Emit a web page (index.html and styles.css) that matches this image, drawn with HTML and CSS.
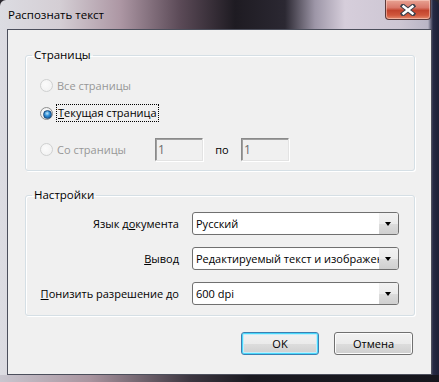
FILE: index.html
```html
<!DOCTYPE html>
<html lang="ru">
<head>
    <meta charset="UTF-8">
    <title>Распознать текст</title>
    <link rel="stylesheet" href="styles.css">
</head>
<body>
    <div class="window">
        <div class="titlebar">
            <span class="title">Распознать текст</span>
            <button class="close" title="Закрыть">
                <svg width="16" height="12" viewBox="0 0 16 12">
                    <path d="M3 2 L13 10 M13 2 L3 10" stroke="#3b3f4a" stroke-width="4.5" stroke-linecap="square"/>
                    <path d="M3.5 2.5 L12.5 9.5 M12.5 2.5 L3.5 9.5" stroke="#ffffff" stroke-width="2.4" stroke-linecap="square"/>
                </svg>
            </button>
        </div>

        <div class="client">
            <fieldset class="group pages">
                <legend>Страницы</legend>
                <label class="radio disabled"><span class="dot"></span>Все страницы</label>
                <label class="radio checked"><span class="dot"></span><span class="focus"><u>Т</u>екущая страница</span></label>
                <div class="range">
                    <label class="radio disabled"><span class="dot"></span>Со страницы</label>
                    <input class="num" type="text" value="1" disabled>
                    <span class="to">по</span>
                    <input class="num" type="text" value="1" disabled>
                </div>
            </fieldset>

            <fieldset class="group settings">
                <legend>Настройки</legend>
                <span class="field-label">Язык д<u>о</u>кумента</span>
                <div class="combo"><span class="combo-text">Русский</span><span class="arrow"></span></div>

                <span class="field-label"><u>В</u>ывод</span>
                <div class="combo"><span class="combo-text">Редактируемый текст и изображения</span><span class="arrow"></span></div>

                <span class="field-label"><u>П</u>онизить разрешение до</span>
                <div class="combo"><span class="combo-text">600 dpi</span><span class="arrow"></span></div>
            </fieldset>

            <div class="buttons">
                <button class="btn default">OK</button>
                <button class="btn">Отмена</button>
            </div>
        </div>
    </div>
</body>
</html>
```

FILE: styles.css
```css
* {
    margin: 0;
    padding: 0;
    box-sizing: border-box;
}

body {
    background: #2a2830;
    font-family: 'Open Sans', 'Noto Sans', sans-serif;
    font-size: 11px;
    color: #000;
}

.window {
    width: 439px;
    height: 382px;
    padding: 0 7px 7px 7px;
    border-radius: 6px 6px 0 0;
    background:
        linear-gradient(90deg, #c9c6cf 0, #a9949f 90px, #3c3640 190px, #1b1a21 250px, #16161d 100%) bottom / 100% 7px no-repeat,
        linear-gradient(90deg, #dcdce2 0, #d4ced4 60px, #ad97a4 120px, #5b4a57 180px, #1e1b22 235px, #2b2832 285px, #9d96a7 315px, #d6cedb 345px, #cdc6d3 400px, #b9b5c5 428px, #262a44 433px, #1d2036 100%);
}

.titlebar {
    height: 29px;
    display: flex;
    justify-content: space-between;
    align-items: flex-start;
}

.title {
    padding: 6px 0 0 1px;
    line-height: 17px;
    font-size: 11.5px;
    color: #000;
}

.close {
    width: 46px;
    height: 20px;
    margin-right: 1px;
    border: 1px solid #5b3a3a;
    border-top: none;
    border-radius: 0 0 4px 4px;
    background: linear-gradient(#e8a393 0, #d9786a 40%, #c2432d 55%, #d0573c 80%, #e48a6e 100%);
    box-shadow: inset 0 0 0 1px rgba(255, 220, 210, 0.5);
    display: flex;
    align-items: center;
    justify-content: center;
}

.client {
    height: 346px;
    background: #f0f0f0;
    border: 1px solid #4c4f5c;
    padding: 17px 17px 0 17px;
}

.group {
    border: 1px solid #d5dfe5;
    border-radius: 3px;
    width: 390px;
    box-shadow: inset 1px 1px 0 #fff, 1px 1px 0 #fff;
}

.group legend {
    margin-left: -8px;
    padding: 0 2px;
    line-height: 16px;
    font-size: 11.5px;
}

.pages {
    padding: 11px 10px 9px 14px;
}

.radio {
    display: flex;
    align-items: center;
    height: 22px;
    gap: 4px;
}

.radio + .radio {
    margin-top: 6px;
}

.radio.disabled {
    color: #979797;
}

.dot {
    width: 13px;
    height: 13px;
    border-radius: 50%;
    border: 1px solid #8e8f8f;
    background: radial-gradient(circle at 40% 40%, #fff 0, #f2f2f2 45%, #d4d4d4 100%);
    flex: none;
    position: relative;
}

.disabled .dot {
    border-color: #cfd0d0;
    background: radial-gradient(circle at 40% 40%, #fbfbfb 0, #efefef 100%);
}

.checked .dot::after {
    content: '';
    position: absolute;
    left: 2px;
    top: 2px;
    width: 7px;
    height: 7px;
    border-radius: 50%;
    border: 1px solid #1d4a7a;
    background: radial-gradient(circle at 45% 35%, #bfe6fa 0, #2a8ad4 45%, #0f4f8f 100%);
}

.focus {
    outline: 1px dotted #000;
    padding: 0 1px;
    line-height: 16px;
}

.range {
    display: flex;
    align-items: center;
    margin-top: 14px;
    height: 23px;
}

.range .radio {
    width: 115px;
}

.num {
    width: 48px;
    height: 23px;
    background: #f0f0f0;
    border: 1px solid;
    border-color: #8a8a8a #e3e3e3 #e3e3e3 #8a8a8a;
    box-shadow: inset 1px 1px 0 #a0a0a0, 1px 1px 0 #fff;
    font: inherit;
    font-size: 12px;
    color: #6d6d6d;
    padding: 0 2px;
}

.to {
    width: 38px;
    text-align: center;
}

.settings {
    margin-top: 16px;
    padding: 9px 10px 10px 14px;
    display: grid;
    grid-template-columns: 139px 207px;
    column-gap: 13px;
    row-gap: 12px;
    align-items: center;
}

.field-label {
    text-align: right;
    white-space: nowrap;
}

.combo {
    display: flex;
    height: 23px;
    border: 1px solid #707070;
    border-radius: 3px;
    background: #fff;
    overflow: hidden;
    box-shadow: inset 0 0 0 1px #fdfdfd;
}

.combo-text {
    flex: 1;
    overflow: hidden;
    white-space: nowrap;
    padding-left: 3px;
    line-height: 21px;
}

.arrow {
    width: 19px;
    flex: none;
    background: linear-gradient(#f2f2f2 0, #ebebeb 50%, #dddddd 51%, #cfcfcf 100%);
    position: relative;
}

.arrow::after {
    content: '';
    position: absolute;
    left: 6px;
    top: 9px;
    border-left: 3.5px solid transparent;
    border-right: 3.5px solid transparent;
    border-top: 4px solid #000;
}

.buttons {
    display: flex;
    justify-content: flex-end;
    gap: 15px;
    margin-top: 16px;
    padding-right: 1px;
}

.btn {
    width: 79px;
    height: 23px;
    font: inherit;
    color: #000;
    border: 1px solid #707070;
    border-radius: 3px;
    background: linear-gradient(#f2f2f2 0, #ebebeb 50%, #dddddd 51%, #cfcfcf 100%);
    box-shadow: inset 0 0 0 1px #fcfcfc;
}

.btn.default {
    width: 78px;
    border-color: #3c7fb1;
    box-shadow: inset 0 0 0 1px #48d8fb, inset 0 0 0 2px #c2ecfb;
}
```
